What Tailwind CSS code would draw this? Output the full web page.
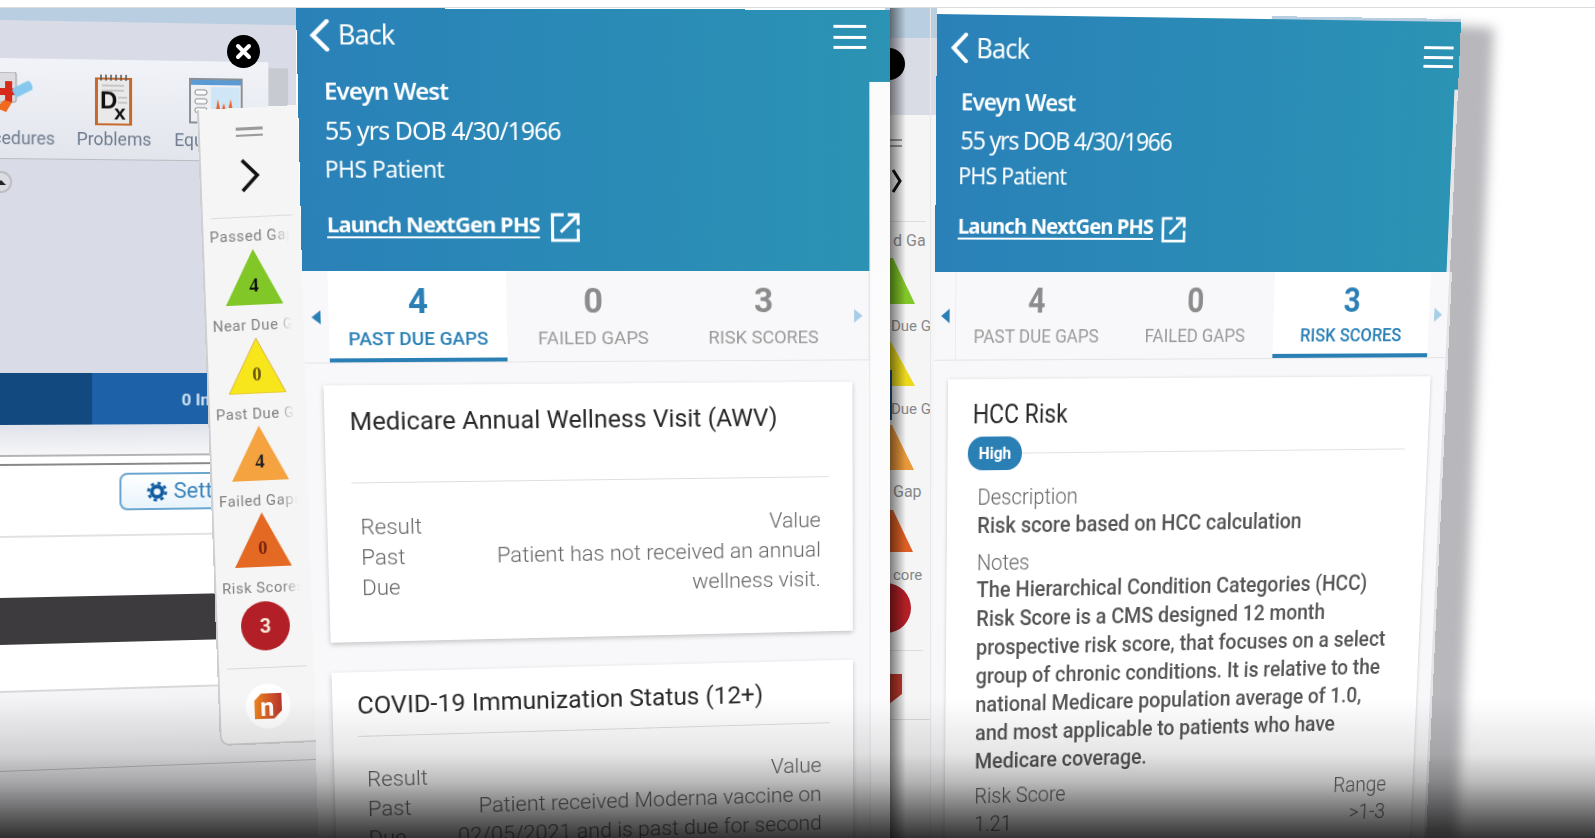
<!DOCTYPE html>
<html lang="en">
<head>
<meta charset="UTF-8">
<title>Patient Gaps</title>
<script src="https://cdn.jsdelivr.net/npm/@tailwindcss/browser@4"></script>
</head>
<body class="bg-white">
<div class="relative w-[1595px] h-[838px] overflow-hidden bg-white font-['Roboto',sans-serif] blur-[0.4px]">

  <!-- strip of the second window, seen between the two panels -->
  <div class="absolute left-[885px] top-[8px] w-[52px] h-[830px] overflow-hidden bg-[#f5f5f6]">
    <svg width="52" height="830" viewBox="0 0 52 830">
      <rect x="0" y="0" width="52" height="30" fill="#b9cfe1"/>
      <rect x="0" y="30" width="52" height="77" fill="#d9dbe5"/>
      <circle cx="4" cy="56" r="16" fill="#000"/>
      <rect x="0" y="131" width="17" height="2" fill="#999"/>
      <rect x="0" y="137" width="17" height="2" fill="#999"/>
      <path d="M8 162l7 11-7 11" fill="none" stroke="#111" stroke-width="3"/>
      <rect x="0" y="213" width="41" height="1" fill="#ddd"/>
      <text x="8" y="238" font-size="16" fill="#888" font-family="Roboto">d Ga</text>
      <polygon points="8,250 30,296 0,296 0,250" fill="#82c728"/>
      <text x="6" y="323" font-size="15" fill="#888" font-family="Roboto">Due G</text>
      <polygon points="6,334 30,378 0,378 0,334" fill="#ecd91c"/>
      <rect x="0" y="362" width="7" height="50" fill="#1a5a9a"/>
      <text x="6" y="406" font-size="15" fill="#888" font-family="Roboto">Due G</text>
      <polygon points="7,417 29,462 0,462 0,417" fill="#e9983a"/>
      <text x="8" y="489" font-size="16" fill="#888" font-family="Roboto">Gap</text>
      <polygon points="8,502 28,544 0,544 0,502" fill="#dd5f25"/>
      <text x="8" y="572" font-size="15" fill="#888" font-family="Roboto">core</text>
      <circle cx="1" cy="600" r="25" fill="#b21f26"/>
      <rect x="0" y="642" width="38" height="1" fill="#ddd"/>
      <polygon points="0,666 17,666 17,686 4,696 0,696" fill="#c0392b"/>
      <rect x="0" y="711" width="45" height="1" fill="#d8d8d8"/>
      <rect x="45" y="0" width="1" height="830" fill="#e8e8ea"/>
    </svg>
    <div class="absolute left-[5px] top-0 w-[16px] h-full bg-gradient-to-r from-black/50 to-transparent"></div>
  </div>

  <!-- first window, upper part -->
  <div class="absolute left-0 top-0 origin-top-left w-[296px] h-[369px] bg-[#d9dbe6] [transform:matrix3d(1.01514,.01907,0,.0000511,0,1,0,0,0,0,1,0,0,4,0,1)]">
    <div class="absolute left-0 -top-[8px] h-[24px] w-full bg-[#b9cfe1]"></div>
    <div class="absolute left-0 top-[54px] flex h-[101px] w-[268px] gap-[5px] overflow-hidden border-b border-[#bcbcc0] bg-gradient-to-b from-[#f1f3f9] to-[#e3e5ec]">
      <div class="-ml-[40px] flex w-[100px] shrink-0 flex-col items-center pt-[14px]">
        <svg class="h-[56px]" width="44" height="56" viewBox="0 0 44 56">
          <rect x="6" y="0" width="22" height="30" rx="2" fill="#dcdce0" stroke="#999"/>
          <path d="M10 16h7V9h7v7h7v7h-7v7h-7v-7h-7z" fill="#d62a1a"/>
          <path d="M8 36l8-8 8 2-6 10z" fill="#ef6a20"/>
          <rect x="25" y="12" width="20" height="10" rx="3" fill="#86c8ee" transform="rotate(-28 34 18)"/>
        </svg>
        <span class="text-[17.5px] leading-[20px] text-[#6f7c8e]">Procedures</span>
      </div>
      <div class="ml-[3px] flex w-[90px] shrink-0 flex-col items-center pt-[14px]">
        <svg class="h-[56px]" width="40" height="56" viewBox="0 0 40 56">
          <rect x="1" y="4" width="37" height="48" fill="#c8692c"/>
          <rect x="4" y="6" width="31" height="44" fill="#e9e9ea"/>
          <path d="M7 1v6M12 1v6M17 1v6M22 1v6M27 1v6M32 1v6" stroke="#555" stroke-width="1.5"/>
          <path d="M8 12h22M8 17h22M24 24h9M24 29h9" stroke="#bbb" stroke-width="1.5"/>
          <text x="6" y="35" font-size="24" font-weight="700" font-family="Liberation Sans" fill="#111">D</text>
          <text x="20" y="46" font-size="21" font-weight="700" font-family="Liberation Sans" fill="#111">x</text>
        </svg>
        <span class="text-[17.5px] leading-[20px] text-[#6f7c8e]">Problems</span>
      </div>
      <div class="ml-[2px] flex w-[100px] shrink-0 flex-col items-center pt-[14px]">
        <svg class="h-[56px]" width="56" height="56" viewBox="0 0 54 56">
          <rect x="1" y="4" width="52" height="44" fill="#eef0f3" stroke="#8a8f98" stroke-width="2"/>
          <rect x="2" y="5" width="50" height="5" fill="#5b9bd5"/>
          <rect x="6" y="15" width="12" height="5" rx="2" fill="#fff" stroke="#888"/>
          <rect x="6" y="24" width="12" height="5" rx="2" fill="#fff" stroke="#888"/>
          <rect x="6" y="33" width="12" height="5" rx="2" fill="#fff" stroke="#888"/>
          <rect x="22" y="12" width="29" height="30" fill="#cfe6f6"/>
          <path d="M26 42l3-18 3 14 3-10 3 12 4-16 3 18z" fill="#e8622a"/>
        </svg>
        <span class="text-[17.5px] leading-[20px] text-[#6f7c8e]">Equipment</span>
      </div>
    </div>
    <div class="absolute left-[268px] top-[60px] h-[40px] w-[20px] bg-[#c8cad2]"></div>
    <div class="absolute -left-[10px] top-[167px] flex h-[22px] w-[22px] items-center justify-center rounded-full border-2 border-[#bdbdc2] bg-[#dcdde4]">
      <div class="h-0 w-0 border-x-[5px] border-b-[5px] border-x-transparent border-b-[#222]"></div>
    </div>
  </div>

  <!-- first window, lower part -->
  <div class="absolute left-0 top-0 origin-top-left w-[330px] h-[477px] bg-white [transform:matrix3d(1.0324,.0367,0,.0000984,0,1,0,0,0,0,1,0,0,373,0,1)]">
    <div class="flex h-[52px]">
      <div class="w-[90px] bg-[#124a80]"></div>
      <div class="flex-1 bg-[#1d62a8] pl-[89px] pt-[17px] text-[17px] font-bold leading-[20px] text-[#cfe0f2]">0 In</div>
    </div>
    <div class="h-[32px] border-b-2 border-[#b4b4b8] bg-gradient-to-b from-[#e1e3eb] to-[#f6f6f8]"></div>
    <div class="h-[9px] border-b-2 border-[#888]"></div>
    <div class="h-[70px] pl-[117px] pt-[8px]">
      <div class="flex h-[38px] w-[130px] items-center gap-[6px] rounded-[8px] border-2 border-[#6aa5cf] bg-gradient-to-b from-white to-[#e8f3fb] pl-[25px] text-[22px] leading-[22px] text-[#3a82b8]">
        <svg class="shrink-0" width="21" height="21" viewBox="0 0 22 22"><circle cx="11" cy="11" r="5.5" fill="none" stroke="#0f5da0" stroke-width="4"/><circle cx="11" cy="11" r="9" fill="none" stroke="#0f5da0" stroke-width="3" stroke-dasharray="3.5 3.57"/></svg>
        <span>Settings</span>
      </div>
    </div>
    <div class="h-[62px] border-t-2 border-[#e2e2e4]"></div>
    <div class="h-[47px] bg-[#3d3b3d]"></div>
    <div class="h-[46px]"></div>
    <div class="h-[80px] border-t-2 border-[#d8d8da] bg-gradient-to-b from-[#f5f5f7] to-[#e6e6e9]"></div>
    <div class="h-[80px] border-t border-[#bbb] bg-[#e6e6e9]"></div>
  </div>

  <!-- close button -->
  <div class="absolute left-[227px] top-[35px] flex h-[33px] w-[33px] items-center justify-center rounded-full bg-black">
    <svg width="17" height="17" viewBox="0 0 17 17"><path d="M3 3l11 11M14 3L3 14" stroke="#fff" stroke-width="4" stroke-linecap="round"/></svg>
  </div>

  <!-- gaps sidebar -->
  <div class="absolute left-0 top-0 origin-top-left flex h-[636px] w-[100px] flex-col rounded-bl-[10px] border-l-2 border-b-2 border-[#cfcfd2] bg-[#f5f5f6] [transform:matrix3d(.9959,-.05144,0,-.00001374,.04697,1.0366,0,.00004907,0,0,1,0,197,110,0,1)]">
    <div class="mx-auto mt-[19px] flex w-[27px] flex-col gap-[4px]">
      <div class="h-[2.5px] bg-[#9a9a9a]"></div>
      <div class="h-[2.5px] bg-[#9a9a9a]"></div>
    </div>
    <svg class="mx-auto mt-[21px]" width="22" height="34" viewBox="0 0 22 34"><path d="M3 2l15 15L3 32" fill="none" stroke="#111" stroke-width="3.5"/></svg>
    <div class="mx-[8px] mt-[23px] h-px bg-[#dcdcde]"></div>

    <div class="mt-[8px] ml-[6px] mr-[12px] overflow-hidden whitespace-nowrap text-[15px] leading-[20px] tracking-[.6px] text-[#808080] [mask-image:linear-gradient(to_right,black_78%,transparent)]">Passed Gaps</div>
    <svg class="mx-auto mt-[3px]" width="58" height="55" viewBox="0 0 58 55"><polygon points="29,0 58,55 0,55" fill="#82c728"/><text x="29" y="42" text-anchor="middle" font-size="19" font-weight="700" font-family="Liberation Serif" fill="#111">4</text></svg>
    <div class="mt-[10px] ml-[6px] mr-[12px] overflow-hidden whitespace-nowrap text-[15px] leading-[20px] tracking-[.6px] text-[#808080] [mask-image:linear-gradient(to_right,black_78%,transparent)]">Near Due Gaps</div>
    <svg class="mx-auto mt-[3px]" width="58" height="55" viewBox="0 0 58 55"><polygon points="29,0 58,55 0,55" fill="#f7e61c" stroke="#d9b54a"/><text x="29" y="42" text-anchor="middle" font-size="19" font-weight="700" font-family="Liberation Serif" fill="#6b5a10">0</text></svg>
    <div class="mt-[10px] ml-[6px] mr-[12px] overflow-hidden whitespace-nowrap text-[15px] leading-[20px] tracking-[.6px] text-[#808080] [mask-image:linear-gradient(to_right,black_78%,transparent)]">Past Due Gaps</div>
    <svg class="mx-auto mt-[2px]" width="58" height="55" viewBox="0 0 58 55"><polygon points="29,0 58,55 0,55" fill="#f4a340"/><text x="29" y="42" text-anchor="middle" font-size="19" font-weight="700" font-family="Liberation Serif" fill="#222">4</text></svg>
    <div class="mt-[10px] ml-[6px] mr-[12px] overflow-hidden whitespace-nowrap text-[15px] leading-[20px] tracking-[.6px] text-[#808080] [mask-image:linear-gradient(to_right,black_78%,transparent)]">Failed Gaps</div>
    <svg class="mx-auto mt-[2px]" width="58" height="55" viewBox="0 0 58 55"><polygon points="29,0 58,55 0,55" fill="#e46a23"/><text x="29" y="42" text-anchor="middle" font-size="19" font-weight="700" font-family="Liberation Serif" fill="#7a2415">0</text></svg>
    <div class="mt-[11px] ml-[6px] mr-[12px] overflow-hidden whitespace-nowrap text-[15px] leading-[20px] tracking-[.6px] text-[#808080] [mask-image:linear-gradient(to_right,black_78%,transparent)]">Risk Scores</div>
    <div class="mx-auto mt-[4px] flex h-[50px] w-[50px] items-center justify-center rounded-full bg-[#b21f26] text-[20px] font-bold text-[#f6e9dc]">3</div>
    <div class="mx-[8px] mt-[17px] h-px bg-[#d8d8da]"></div>
    <div class="mx-auto mt-[16px] flex h-[46px] w-[46px] items-center justify-center rounded-full bg-white">
      <svg width="32" height="32" viewBox="0 0 32 32">
        <defs><linearGradient id="logo" x1="0" x2="1"><stop offset="0" stop-color="#ec8420"/><stop offset="1" stop-color="#b8342c"/></linearGradient></defs>
        <polygon points="2,10 9,3 30,3 30,21 22,29 2,29" fill="url(#logo)"/>
        <text x="15" y="26" text-anchor="middle" font-size="26" font-weight="700" font-family="Roboto" fill="#fff">n</text>
      </svg>
    </div>
  </div>

  <!-- middle panel: header -->
  <div class="absolute left-0 top-0 origin-top-left h-[263px] w-[594px] bg-gradient-to-r from-[#2a81b8] to-[#2b93b4] px-[24px] font-['Noto_Sans',sans-serif] text-white [transform:matrix3d(1.01148,.003496,0,.0000129,.03452,1.01053,0,.0000388,0,0,1,0,296,8,0,1)]">
    <div class="flex h-[47px] justify-between pt-[6px]">
      <div class="-ml-[12px] flex items-center gap-[8px] text-[27px] tracking-[-1px]">
        <svg width="21" height="32" viewBox="0 0 21 32"><path d="M18 2L4 16l14 14" fill="none" stroke="#fff" stroke-width="4.5" stroke-linecap="round"/></svg>
        <span>Back</span>
      </div>
      <div class="flex w-[33px] flex-col gap-[7.5px] pt-[9px]">
        <div class="h-[3px] bg-white"></div>
        <div class="h-[3px] bg-white"></div>
        <div class="h-[3px] bg-white"></div>
      </div>
    </div>
    <div class="mt-[18px] ml-[2px] text-[24px] font-semibold leading-[34px] tracking-[-.9px]">Eveyn West</div>
    <div class="mt-[4px] ml-[2px] text-[25px] leading-[36px] tracking-[-1px]">55 yrs DOB 4/30/1966</div>
    <div class="mt-[3px] ml-[1px] text-[23px] leading-[36px] tracking-[-.6px]">PHS Patient</div>
    <div class="mt-[17px] ml-[2px] flex items-center gap-[10px]">
      <span class="text-[22px] font-bold leading-[36px] tracking-[-.9px] underline underline-offset-[4px]">Launch NextGen PHS</span>
      <svg class="mt-[8px]" width="32" height="31" viewBox="0 0 30 30"><path d="M13 3H2v25h25V17" fill="none" stroke="#fff" stroke-width="3"/><path d="M10 20L27 3M17 3h10v10" fill="none" stroke="#fff" stroke-width="3"/></svg>
    </div>
    <div class="absolute left-[573px] top-[72px] h-[191px] w-[21px] border-l border-[#e2e2e6] bg-[#fbfbfc]"></div>
  </div>

  <!-- middle panel: tabs and cards -->
  <div class="absolute left-0 top-0 origin-top-left h-[640px] w-[600px] overflow-hidden bg-[#f8f8fa] [transform:matrix3d(1.03647,.0172,0,.00006345,.04417,1.02433,0,.00004962,0,0,1,0,302,271,0,1)]">
    <div class="absolute right-0 top-0 h-full w-[22px] border-l border-[#e6e6ea] bg-[#fcfcfd]"></div>
    <div class="relative flex h-[92px] w-[578px] items-stretch border-b border-[#e4e4e8]">
      <div class="flex w-[25px] items-center justify-center"><div class="h-0 w-0 border-y-[7px] border-r-[9px] border-y-transparent border-r-[#2a80b5]"></div></div>
      <div class="flex w-[178px] flex-col items-center border-b-[4px] border-[#2a80b5] bg-white pt-[10px] text-[#2a80b5]">
        <span class="text-[35px] font-bold leading-[42px]">4</span>
        <span class="mt-[3px] text-[19px] font-medium leading-[26px]">PAST DUE GAPS</span>
      </div>
      <div class="flex w-[176px] flex-col items-center pt-[10px] text-[#8c8c8c]">
        <span class="text-[35px] font-bold leading-[42px]">0</span>
        <span class="mt-[3px] text-[19px] leading-[26px] text-[#9a9a9a]">FAILED GAPS</span>
      </div>
      <div class="flex w-[176px] flex-col items-center pt-[10px] text-[#8c8c8c]">
        <span class="text-[35px] font-bold leading-[42px]">3</span>
        <span class="mt-[3px] text-[19px] leading-[26px] text-[#9a9a9a]">RISK SCORES</span>
      </div>
      <div class="flex w-[23px] items-center justify-center border-r border-[#ececf0]"><div class="h-0 w-0 border-y-[7px] border-l-[9px] border-y-transparent border-l-[#a9cfe8]"></div></div>
    </div>

    <div class="relative ml-[18px] mt-[22px] h-[261px] w-[542px] bg-white shadow-[0_2px_5px_rgba(0,0,0,.22)]">
      <div class="mx-[25px] h-[99px] border-b border-[#dedee0] pt-[19px] text-[25.7px] leading-[34px] text-[#2a2a2a]">Medicare Annual Wellness Visit (AWV)</div>
      <div class="flex justify-between pl-[33px] pr-[34px] pt-[29px] text-[22.5px] font-light leading-[31px] text-[#666]">
        <div class="w-[60px]">Result<br>Past<br>Due</div>
        <div class="text-right">Value<br>Patient has not received an annual<br>wellness visit.</div>
      </div>
    </div>

    <div class="relative ml-[18px] mt-[31px] h-[300px] w-[542px] bg-white shadow-[0_2px_5px_rgba(0,0,0,.22)]">
      <div class="mx-[25px] h-[67px] border-b border-[#dedee0] pt-[17px] text-[25.7px] leading-[34px] text-[#2a2a2a]">COVID-19 Immunization Status (12+)</div>
      <div class="flex justify-between pl-[33px] pr-[34px] pt-[29px] text-[22.5px] font-light leading-[31px] text-[#666]">
        <div class="w-[60px]">Result<br>Past<br>Due</div>
        <div class="text-right whitespace-nowrap">Value<br>Patient received Moderna vaccine on<br>02/05/2021 and is past due for second</div>
      </div>
    </div>
  </div>

  <!-- soft shadow the right panel throws on the page -->
  <svg class="absolute left-0 top-0 blur-[6px]" width="1595" height="838" viewBox="0 0 1595 838">
    <polygon points="1440,24 1494,28 1456,850 1400,850" fill="#b8b8bc"/>
  </svg>

  <!-- right panel: header -->
  <div class="absolute left-0 top-0 origin-top-left h-[258px] w-[570px] bg-gradient-to-r from-[#2a81b8] to-[#2b93b4] px-[26px] font-['Noto_Sans',sans-serif] text-white [transform:matrix3d(1.00132,.01527,0,.00005614,.05806,1.01915,0,.00007039,0,0,1,0,937,14,0,1)]">
    <div class="absolute right-0 -top-[3px] h-[3px] w-[210px] bg-[#b9cfe1]"></div>
    <div class="flex h-[53px] justify-between pt-[13px]">
      <div class="-ml-[12px] flex items-center gap-[8px] text-[27px] tracking-[-1px]">
        <svg width="20" height="30" viewBox="0 0 21 32"><path d="M18 2L4 16l14 14" fill="none" stroke="#fff" stroke-width="4.5" stroke-linecap="round"/></svg>
        <span>Back</span>
      </div>
      <div class="-mr-[19px] flex w-[33px] flex-col gap-[6.5px] pt-[12px]">
        <div class="h-[3px] bg-white"></div>
        <div class="h-[3px] bg-white"></div>
        <div class="h-[3px] bg-white"></div>
      </div>
    </div>
    <div class="mt-[16px] text-[24px] font-semibold leading-[34px] tracking-[-1px]">Eveyn West</div>
    <div class="mt-[3px] text-[25px] leading-[36px] tracking-[-1.4px]">55 yrs DOB 4/30/1966</div>
    <div class="-ml-[2px] text-[23px] leading-[36px] tracking-[-.9px]">PHS Patient</div>
    <div class="mt-[14px] -ml-[2px] flex items-center gap-[8px]">
      <span class="text-[22px] font-bold leading-[36px] tracking-[-1px] underline underline-offset-[4px]">Launch NextGen PHS</span>
      <svg class="mt-[8px]" width="30" height="28" viewBox="0 0 30 30"><path d="M13 3H2v25h25V17" fill="none" stroke="#fff" stroke-width="3"/><path d="M10 20L27 3M17 3h10v10" fill="none" stroke="#fff" stroke-width="3"/></svg>
    </div>
    <div class="absolute left-[566px] top-[69px] h-[189px] w-[4px] bg-[#e6e6e8]"></div>
  </div>

  <!-- right panel: tabs and score card -->
  <div class="absolute left-0 top-0 origin-top-left h-[640px] w-[570px] overflow-hidden border-r-[3px] border-[#e4e4e6] bg-[#f8f8fa] [transform:matrix3d(.98705,.014993,0,.00005512,.0671,1.07314,0,.00007948,0,0,1,0,935,272,0,1)]">
    <div class="flex h-[85px] items-stretch border-b border-[#e4e4e8]">
      <div class="flex w-[23px] items-center justify-center border-r border-[#ececf0]"><div class="h-0 w-0 border-y-[7px] border-r-[9px] border-y-transparent border-r-[#2a80b5]"></div></div>
      <div class="flex w-[174px] flex-col items-center pt-[8px] text-[#8c8c8c]">
        <span class="text-[33px] font-bold leading-[40px]">4</span>
        <span class="mt-[1px] text-[18.6px] leading-[26px] text-[#9a9a9a]">PAST DUE GAPS</span>
      </div>
      <div class="flex w-[174px] flex-col items-center pt-[8px] text-[#8c8c8c]">
        <span class="text-[33px] font-bold leading-[40px]">0</span>
        <span class="mt-[1px] text-[18.6px] leading-[26px] text-[#9a9a9a]">FAILED GAPS</span>
      </div>
      <div class="flex w-[175px] flex-col items-center border-b-[4px] border-[#2a80b5] bg-white pt-[8px] text-[#2a80b5]">
        <span class="text-[33px] font-bold leading-[40px]">3</span>
        <span class="mt-[1px] text-[18.6px] font-medium leading-[26px]">RISK SCORES</span>
      </div>
      <div class="flex w-[21px] items-center justify-center"><div class="h-0 w-0 border-y-[7px] border-l-[9px] border-y-transparent border-l-[#a9cfe8]"></div></div>
    </div>

    <div class="ml-[15px] mt-[18px] h-[520px] w-[536px] bg-white shadow-[0_1px_4px_rgba(0,0,0,.2)]">
      <div class="pl-[27px] pt-[18px] text-[25px] leading-[34px] text-[#2a2a2a]">HCC Risk</div>
      <div class="flex items-center pl-[22px] pr-[26px] pt-[4px]">
        <span class="flex h-[33px] w-[59px] items-center justify-center rounded-[16px] bg-[#2a80b5] text-[17px] font-bold text-white">High</span>
        <div class="h-px flex-1 bg-[#e2e2e4]"></div>
      </div>
      <div class="pl-[33px] pr-[10px] pt-[12px] text-[#555]">
        <div class="text-[22.2px] font-light leading-[28px] text-[#666]">Description</div>
        <div class="text-[22.1px] font-medium leading-[28px]">Risk score based on HCC calculation</div>
        <div class="mt-[9px] text-[22.2px] font-light leading-[28px] text-[#666]">Notes</div>
        <div class="-mt-[1px] text-[22.1px] font-medium leading-[29px]">The Hierarchical Condition Categories (HCC)<br>Risk Score is a CMS designed 12 month<br>prospective risk score, that focuses on a select<br>group of chronic conditions. It is relative to the<br>national Medicare population average of 1.0,<br>and most applicable to patients who have<br>Medicare coverage.</div>
        <div class="mt-[7px] flex justify-between pr-[21px] text-[22.2px] font-light leading-[29px] text-[#666]">
          <div>Risk Score<br>1.21</div>
          <div class="text-right">Range<br>&gt;1-3</div>
        </div>
      </div>
    </div>
  </div>

  <!-- video player shade along the bottom -->
  <div class="absolute bottom-0 left-0 h-[140px] w-full bg-[linear-gradient(to_bottom,transparent_0%,rgba(0,0,0,.1)_40%,rgba(0,0,0,.27)_60%,rgba(0,0,0,.8)_100%)]"></div>

  <!-- white bar along the top -->
  <div class="absolute left-0 top-0 h-[8px] w-full border-b border-[#dcdcdc] bg-white"></div>
</div>
</body>
</html>
